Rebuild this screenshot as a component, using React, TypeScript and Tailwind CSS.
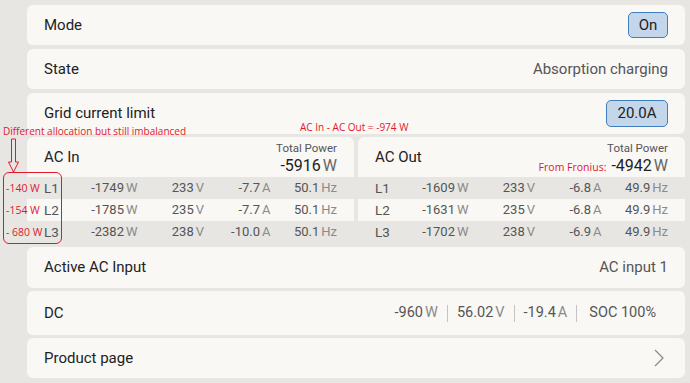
import React from "react";

interface Phase {
  name: string;
  watts: string;
  volts: string;
  amps: string;
  hz: string;
}

const acIn: Phase[] = [
  { name: "L1", watts: "-1749", volts: "233", amps: "-7.7", hz: "50.1" },
  { name: "L2", watts: "-1785", volts: "235", amps: "-7.7", hz: "50.1" },
  { name: "L3", watts: "-2382", volts: "238", amps: "-10.0", hz: "50.1" },
];

const acOut: Phase[] = [
  { name: "L1", watts: "-1609", volts: "233", amps: "-6.8", hz: "49.9" },
  { name: "L2", watts: "-1631", volts: "235", amps: "-6.8", hz: "49.9" },
  { name: "L3", watts: "-1702", volts: "238", amps: "-6.9", hz: "49.9" },
];

const Val: React.FC<{ v: string; u: string }> = ({ v, u }) => (
  <span className="text-right whitespace-nowrap">
    <span className="text-[#555]">{v}</span>
    <span className="text-[#8a8a8a] ml-[2px]">{u}</span>
  </span>
);

const PhaseTable: React.FC<{
  title: string;
  total: string;
  note?: string;
  rows: Phase[];
}> = ({ title, total, note, rows }) => (
  <div className="flex-1 rounded-t-[6px] overflow-hidden bg-[#f9f8f5] flex flex-col">
    <div className="h-[40px] flex items-center justify-between px-[17px]">
      <span className="text-[15px] text-[#222]">{title}</span>
      <div className="flex flex-col items-end leading-none">
        <span className="text-[11.5px] text-[#555] mt-[3px]">Total Power</span>
        <div className="flex items-baseline mt-[3px]">
          {note && (
            <span className="text-[10.5px] font-medium text-[#e3172a] font-['Open_Sans'] mr-[5px]">
              {note}
            </span>
          )}
          <span className="text-[16px] text-[#222]">{total}</span>
          <span className="text-[16px] text-[#666] ml-[2px]">W</span>
        </div>
      </div>
    </div>
    {rows.map((r, i) => (
      <div
        key={r.name}
        className={
          "h-[22px] px-[17px] grid grid-cols-[27px_1fr_1fr_1fr_1fr] items-center text-[13px] " +
          (i % 2 === 0 ? "bg-[#e7e6e3]" : "bg-[#f9f8f5]")
        }
      >
        <span className="text-[13.5px] text-[#555]">{r.name}</span>
        <Val v={r.watts} u="W" />
        <Val v={r.volts} u="V" />
        <Val v={r.amps} u="A" />
        <Val v={r.hz} u="Hz" />
      </div>
    ))}
  </div>
);

const Sep = () => <span className="w-px h-[17px] bg-[#c4c4c4] mx-[9px]" />;

const App: React.FC = () => {
  return (
    <div className="w-[690px] h-[383px] bg-[#e7e6e3] relative overflow-hidden font-['Roboto',sans-serif]">
      <div className="pl-[27px] pr-[5px] pt-[5px] flex flex-col">
        <div className="h-[40px] rounded-[6px] bg-[#f9f8f5] flex items-center justify-between px-[17px]">
          <span className="text-[15px] text-[#222]">Mode</span>
          <span className="w-[40px] h-[26px] rounded-[5px] border border-[#3f7fc0] bg-[#c4d7ea] flex items-center justify-center text-[15px] text-[#222]">
            On
          </span>
        </div>
        <div className="mt-[4px] h-[40px] rounded-[6px] bg-[#f9f8f5] flex items-center justify-between px-[17px]">
          <span className="text-[15px] text-[#222]">State</span>
          <span className="text-[15px] text-[#555]">Absorption charging</span>
        </div>
        <div className="mt-[4px] h-[41px] rounded-[6px] bg-[#f9f8f5] flex items-center justify-between px-[17px]">
          <span className="text-[15px] text-[#222]">Grid current limit</span>
          <span className="w-[62px] h-[27px] rounded-[5px] border border-[#3f7fc0] bg-[#c4d7ea] flex items-center justify-center text-[15px] text-[#222]">
            20.0A
          </span>
        </div>
        <div className="mt-[3px] h-[106px] flex gap-[4px]">
          <PhaseTable title="AC In" total="-5916" rows={acIn} />
          <PhaseTable title="AC Out" total="-4942" note="From Fronius:" rows={acOut} />
        </div>
        <div className="mt-[4px] h-[41px] rounded-[6px] bg-[#f9f8f5] flex items-center justify-between px-[17px]">
          <span className="text-[15px] text-[#222]">Active AC Input</span>
          <span className="text-[15px] text-[#555]">AC input 1</span>
        </div>
        <div className="mt-[3px] h-[44px] rounded-[6px] bg-[#f9f8f5] flex items-center justify-between pl-[17px] pr-[29px]">
          <span className="text-[15px] text-[#222]">DC</span>
          <div className="flex items-center text-[14.5px]">
            <Val v="-960" u="W" />
            <Sep />
            <Val v="56.02" u="V" />
            <Sep />
            <Val v="-19.4" u="A" />
            <span className="w-px h-[17px] bg-[#c4c4c4] ml-[9px] mr-[12px]" />
            <span className="text-[#555]">SOC 100%</span>
          </div>
        </div>
        <div className="mt-[3px] h-[40px] rounded-[6px] bg-[#f9f8f5] flex items-center justify-between pl-[17px] pr-[21px]">
          <span className="text-[15px] text-[#222]">Product page</span>
          <svg width="10" height="18" viewBox="0 0 10 18" fill="none">
            <path d="M1 1 L9 9 L1 17" stroke="#888" strokeWidth="1.2" />
          </svg>
        </div>
      </div>

      {/* annotations */}
      <span className="absolute left-[3px] top-[124px] text-[10px] font-medium leading-[14px] text-[#e3172a] font-['Open_Sans'] whitespace-nowrap">
        Different allocation but still imbalanced
      </span>
      <span className="absolute left-[300px] top-[120px] text-[10px] font-medium leading-[14px] text-[#e3172a] font-['Open_Sans'] whitespace-nowrap">
        AC In - AC Out = -974 W
      </span>
      <svg className="absolute left-[6px] top-[138px]" width="16" height="35" viewBox="0 0 16 35" fill="none">
        <path
          d="M5.5 1 V24 H2.5 L7.5 34 L12.5 24 H9.5 V1 Z"
          stroke="#e3172a"
          strokeWidth="1"
          strokeLinejoin="round"
        />
      </svg>
      <div className="absolute left-[3px] top-[172px] w-[59px] h-[72px] rounded-[6px] border border-[#e3172a]" />
      <div className="absolute left-[6px] top-[177px] flex flex-col text-[10.5px] font-medium text-[#e3172a] font-['Open_Sans'] leading-[22px]">
        <span>-140 W</span>
        <span>-154 W</span>
        <span>- 680 W</span>
      </div>
    </div>
  );
};

export default App;
